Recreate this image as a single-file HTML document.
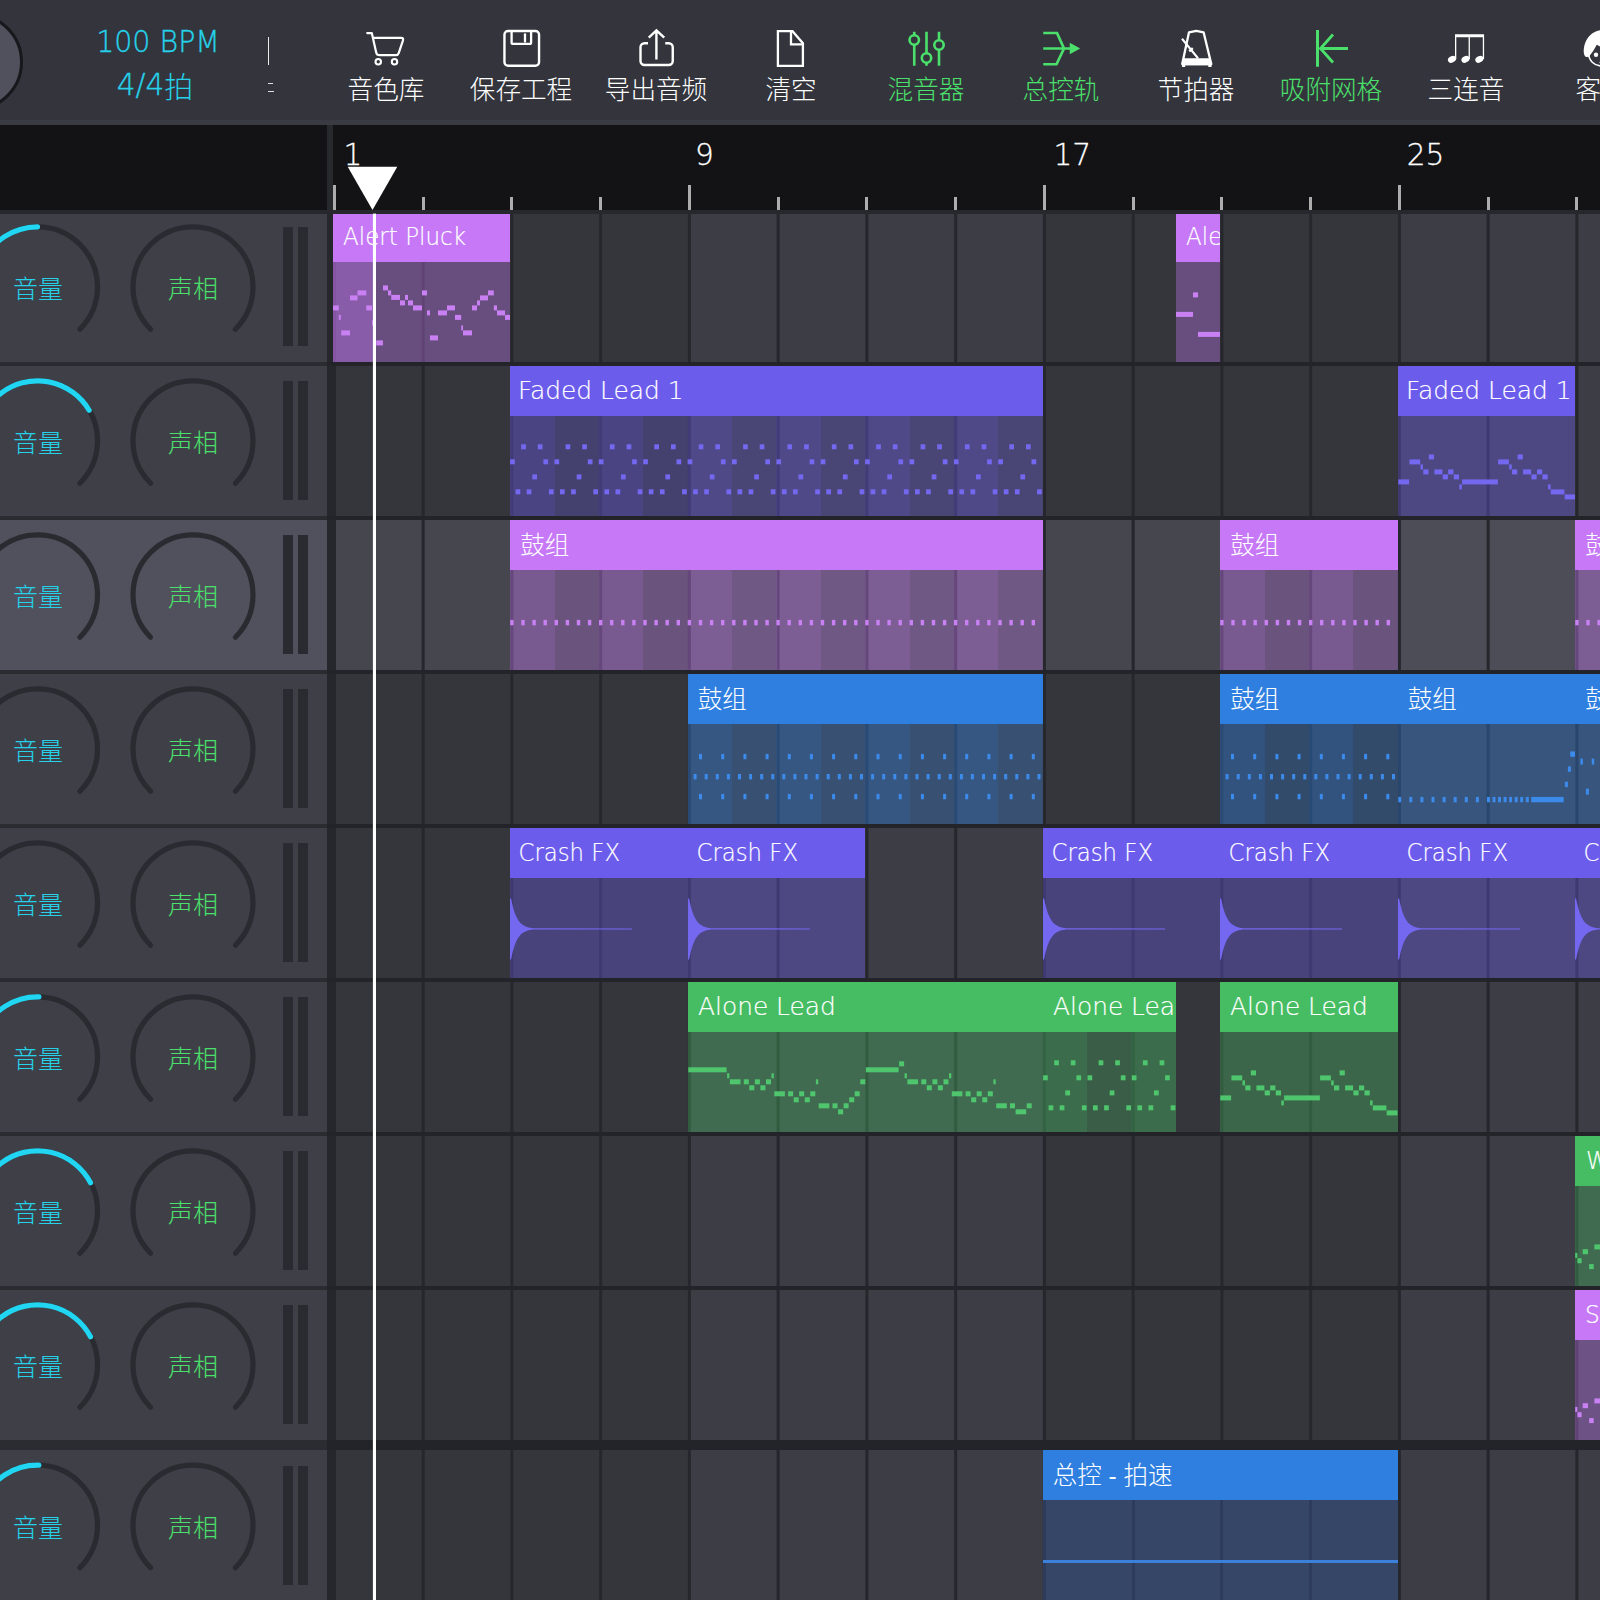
<!DOCTYPE html>
<html lang="zh"><head><meta charset="utf-8"><title>DAW</title>
<style>

*{box-sizing:border-box}
html,body{margin:0;padding:0}
body{width:1600px;height:1600px;overflow:hidden;position:relative;background:#26272c;font-family:"Liberation Sans","Noto Sans CJK SC",sans-serif;}
.abs{position:absolute}
.thin{font-family:"DejaVu Sans Light","DejaVu Sans","Liberation Sans",sans-serif;font-weight:200;-webkit-text-stroke:0.35px currentColor}
#toolbar{position:absolute;left:0;top:0;width:1600px;height:124.6px;background:#33343c}
#ruler{position:absolute;left:0;top:124.6px;width:1600px;height:85.4px;background:#131315}
.tb{position:absolute;top:0;width:140px;height:124px;text-align:center;color:#fff}
.tb .lb{position:absolute;left:-30px;right:-30px;top:72.6px;font-size:25.6px;line-height:34px;font-weight:300;white-space:nowrap;font-family:"Liberation Sans","Noto Sans CJK SC",sans-serif}
.tb svg{position:absolute;left:46px;top:24px;width:48px;height:48px;overflow:visible}
.tb.on{color:#4be06b}
.hdr{position:absolute;left:0;width:327px;background:#3e3f47}
.klabel{position:absolute;font-size:25px;line-height:30px;font-weight:300;white-space:nowrap;font-family:"Liberation Sans","Noto Sans CJK SC",sans-serif}
.meter{position:absolute;width:9.8px;background:#2a2b31}
.clip{position:absolute;overflow:hidden}
.clip .ch{position:absolute;left:0;top:0;right:0;color:#fff;white-space:nowrap;overflow:hidden}
.clip .ch span{position:absolute;left:11px;top:10px;font-family:"DejaVu Sans Light","DejaVu Sans","Liberation Sans",sans-serif;font-weight:200;font-size:24.5px;line-height:30px;letter-spacing:0;color:#fff;transform-origin:0 0;display:block;-webkit-text-stroke:0.2px #fff}
.clip .ch span.cjk{font-family:"Liberation Sans","Noto Sans CJK SC",sans-serif;font-weight:300;font-size:24.5px;left:10px;top:11px;letter-spacing:0;-webkit-text-stroke:0}
.rl{position:absolute;top:13.15px;color:#fff;font-family:"DejaVu Sans Light","DejaVu Sans","Liberation Sans",sans-serif;font-weight:200;font-size:29.5px;line-height:34px;letter-spacing:0;-webkit-text-stroke:0.3px #fff}

</style></head><body>
<div id="toolbar">
<div class="abs" style="left:-75px;top:13.3px;width:98px;height:98px;border-radius:50%;background:#50515c;border:3px solid #17181c"></div>
<div class="abs thin" style="left:57.5px;top:22.4px;width:200px;text-align:center;color:#25d2ea;font-size:29.5px;line-height:40px;transform:scaleX(0.965);transform-origin:100.5px 0">100 BPM</div>
<div class="abs thin" style="left:55px;top:65px;width:200px;text-align:center;color:#25d2ea;font-size:29.5px;line-height:40px">4/4<span style="font-family:'Liberation Sans','Noto Sans CJK SC',sans-serif;font-weight:300;font-size:29px;-webkit-text-stroke:0;position:relative;top:3px">拍</span></div>
<div class="abs" style="left:267.8px;top:36.5px;width:1.5px;height:28.5px;background:#ececec"></div>
<div class="abs" style="left:268px;top:82.6px;width:4.5px;height:1.4px;background:#e0e0e0"></div>
<div class="abs" style="left:268px;top:90.9px;width:6px;height:1.4px;background:#e0e0e0"></div>
<div class="tb" style="left:316px"><svg viewBox="0 0 48 48"><path d="M5.2 9.1H9.8L14.2 28.5Q14.8 31.2 17.5 31.2H34Q36 31.2 36.7 29.2L41 16.3Q41.7 13.9 39.3 13.9H11" fill="none" stroke="currentColor" stroke-width="2.2" stroke-linejoin="round" stroke-linecap="round"/><circle cx="16.25" cy="37.75" r="2.7" fill="none" stroke="currentColor" stroke-width="2.1"/><circle cx="32.5" cy="37.75" r="2.7" fill="none" stroke="currentColor" stroke-width="2.1"/></svg><div class="lb">音色库</div></div>
<div class="tb" style="left:451px"><svg viewBox="0 0 48 48"><rect x="7.45" y="6.95" width="34.6" height="34.85" rx="3.6" fill="none" stroke="currentColor" stroke-width="2.4"/><path d="M14.6 7V18.4Q14.6 19.9 16.1 19.9H32.6Q34.1 19.9 34.1 18.4V7" fill="none" stroke="currentColor" stroke-width="2.3"/><path d="M28 10.3v7.2" stroke="currentColor" stroke-width="2.3" stroke-linecap="round"/></svg><div class="lb">保存工程</div></div>
<div class="tb" style="left:586px"><svg viewBox="0 0 48 48"><path d="M16 19.25H12.5a4 4 0 0 0-4 4V37a4 4 0 0 0 4 4H36.75a4 4 0 0 0 4-4V23.25a4 4 0 0 0-4-4H33.25" fill="none" stroke="currentColor" stroke-width="2.4"/><path d="M24.4 35.5V7M16.75 13.6L24.45 6.4L32.25 13.6" fill="none" stroke="currentColor" stroke-width="2.4"/></svg><div class="lb">导出音频</div></div>
<div class="tb" style="left:721px"><svg viewBox="0 0 48 48"><path d="M10.9 7.2H25.5L35.9 19.3V41.8H10.9z" fill="none" stroke="currentColor" stroke-width="2.3" stroke-linejoin="miter"/><path d="M24 7.2V20.3H35.9" fill="none" stroke="currentColor" stroke-width="2.3"/></svg><div class="lb">清空</div></div>
<div class="tb on" style="left:856px"><svg viewBox="0 0 48 48"><g fill="none" stroke="currentColor" stroke-width="2.6"><path d="M12.25 7.75v3.5M12.25 20.7v21M24.5 7.75v21.5M24.5 38.7v3M37 7.75v8.5M37 25.7v16"/><circle cx="12.25" cy="16" r="4.7"/><circle cx="24.5" cy="34" r="4.7"/><circle cx="37" cy="21" r="4.7"/></g></svg><div class="lb">混音器</div></div>
<div class="tb on" style="left:991px"><svg viewBox="0 0 48 48"><g fill="none" stroke="currentColor" stroke-width="2.7" stroke-linejoin="miter"><path d="M6.25 9H20L27 24.5L19.5 40.25H6.25M6.25 24.5H34"/></g><path d="M32.75 18.75L43.25 24.4L32.75 30.25z" fill="currentColor"/></svg><div class="lb">总控轨</div></div>
<div class="tb" style="left:1126px"><svg viewBox="0 0 48 48"><g fill="none" stroke="currentColor" stroke-width="2.3" stroke-linejoin="round"><path d="M17 8.3L24.3 6.8L31.6 8.3L39.3 40H10.2z"/><path d="M10 14.75L26 34.25" stroke-width="2.1"/><path d="M17.2 27.3L20.8 24.2" stroke-width="2.4"/></g><path d="M11.6 34.3H37.9L39.8 41.2H9.7z" fill="currentColor"/><path d="M10 41h3.2v2H10zM36.3 41h3.2v2h-3.2z" fill="currentColor"/></svg><div class="lb">节拍器</div></div>
<div class="tb on" style="left:1261px"><svg viewBox="0 0 48 48"><g fill="none" stroke="currentColor" stroke-width="2.8"><path d="M10.5 6V42.75" stroke-width="3"/><path d="M13.5 24.5H41M26 10.5L13.5 24.5L26 38.5"/></g></svg><div class="lb">吸附网格</div></div>
<div class="tb" style="left:1396px"><svg viewBox="0 0 48 48"><g fill="currentColor"><path d="M13 10.25H42V13.25H13z"/><path d="M13 11h1.3v24H13zM26.6 11h1.3v24h-1.3zM40.8 11h1.3v24h-1.3z"/><ellipse cx="10" cy="35.3" rx="4.3" ry="3.1" transform="rotate(-28 10 35.3)"/><ellipse cx="23.5" cy="35.3" rx="4.3" ry="3.1" transform="rotate(-28 23.5 35.3)"/><ellipse cx="37.4" cy="35.3" rx="4.3" ry="3.1" transform="rotate(-28 37.4 35.3)"/></g></svg><div class="lb">三连音</div></div>
<div class="tb" style="left:1531px"><svg viewBox="0 0 48 48"><g><circle cx="24.5" cy="29" r="13" fill="#33343c" stroke="currentColor" stroke-width="1.6"/><path d="M7.6 31.5C5.8 28 6.8 21 9.5 16C12.5 10.5 18 6.5 24.5 6V24C22.5 22 21 21 19.6 21C17.5 25 15 29 12.5 32C11 33.6 8.6 33.4 7.6 31.5z" fill="currentColor"/><circle cx="19" cy="30.700" r="2.200" fill="currentColor"/><circle cx="23.700" cy="38.500" r="1.100" fill="currentColor"/></g></svg><div class="lb">客服</div></div>
</div>
<div class="abs" style="left:0;top:120.4px;width:1600px;height:4.4px;background:#3a3b42"></div>
<div id="ruler">
<div class="abs" style="left:327.2px;top:0;width:5.6px;height:86px;background:#28292d"></div>
<div class="abs" style="left:332.90px;top:60.4px;width:3px;height:25px;background:#adadad"></div>
<div class="rl" style="left:343.4px">1</div>
<div class="abs" style="left:421.65px;top:72.4px;width:3px;height:13px;background:#adadad"></div>
<div class="abs" style="left:510.40px;top:72.4px;width:3px;height:13px;background:#adadad"></div>
<div class="abs" style="left:599.15px;top:72.4px;width:3px;height:13px;background:#adadad"></div>
<div class="abs" style="left:687.90px;top:60.4px;width:3px;height:25px;background:#adadad"></div>
<div class="rl" style="left:694.9px">9</div>
<div class="abs" style="left:776.65px;top:72.4px;width:3px;height:13px;background:#adadad"></div>
<div class="abs" style="left:865.40px;top:72.4px;width:3px;height:13px;background:#adadad"></div>
<div class="abs" style="left:954.15px;top:72.4px;width:3px;height:13px;background:#adadad"></div>
<div class="abs" style="left:1042.90px;top:60.4px;width:3px;height:25px;background:#adadad"></div>
<div class="rl" style="left:1053.5px">17</div>
<div class="abs" style="left:1131.65px;top:72.4px;width:3px;height:13px;background:#adadad"></div>
<div class="abs" style="left:1220.40px;top:72.4px;width:3px;height:13px;background:#adadad"></div>
<div class="abs" style="left:1309.15px;top:72.4px;width:3px;height:13px;background:#adadad"></div>
<div class="abs" style="left:1397.90px;top:60.4px;width:3px;height:25px;background:#adadad"></div>
<div class="rl" style="left:1406.7px">25</div>
<div class="abs" style="left:1486.65px;top:72.4px;width:3px;height:13px;background:#adadad"></div>
<div class="abs" style="left:1575.40px;top:72.4px;width:3px;height:13px;background:#adadad"></div>
</div>
<div class="hdr" style="top:211.6px;height:150.4px;background:#3e3f47"></div>
<div class="abs" style="left:334.40px;top:211.6px;width:355.5px;height:150.4px;background:#35363c"></div>
<div class="abs" style="left:689.40px;top:211.6px;width:355.5px;height:150.4px;background:#3c3d45"></div>
<div class="abs" style="left:1044.40px;top:211.6px;width:355.5px;height:150.4px;background:#35363c"></div>
<div class="abs" style="left:1399.40px;top:211.6px;width:355.5px;height:150.4px;background:#3c3d45"></div>
<div class="meter" style="left:283.1px;top:227.2px;height:119px"></div>
<div class="meter" style="left:298.1px;top:227.2px;height:119px"></div>
<div class="klabel" style="left:13px;top:274.1px;color:#25d2ea">音量</div>
<div class="klabel" style="left:168px;top:274.1px;color:#4be06b">声相</div>
<div class="hdr" style="top:365.6px;height:150.4px;background:#3e3f47"></div>
<div class="abs" style="left:334.40px;top:365.6px;width:355.5px;height:150.4px;background:#35363c"></div>
<div class="abs" style="left:689.40px;top:365.6px;width:355.5px;height:150.4px;background:#3c3d45"></div>
<div class="abs" style="left:1044.40px;top:365.6px;width:355.5px;height:150.4px;background:#35363c"></div>
<div class="abs" style="left:1399.40px;top:365.6px;width:355.5px;height:150.4px;background:#3c3d45"></div>
<div class="meter" style="left:283.1px;top:381.2px;height:119px"></div>
<div class="meter" style="left:298.1px;top:381.2px;height:119px"></div>
<div class="klabel" style="left:13px;top:428.1px;color:#25d2ea">音量</div>
<div class="klabel" style="left:168px;top:428.1px;color:#4be06b">声相</div>
<div class="hdr" style="top:519.6px;height:150.4px;background:#50515c"></div>
<div class="abs" style="left:334.40px;top:519.6px;width:355.5px;height:150.4px;background:#45464e"></div>
<div class="abs" style="left:689.40px;top:519.6px;width:355.5px;height:150.4px;background:#4c4d56"></div>
<div class="abs" style="left:1044.40px;top:519.6px;width:355.5px;height:150.4px;background:#45464e"></div>
<div class="abs" style="left:1399.40px;top:519.6px;width:355.5px;height:150.4px;background:#4c4d56"></div>
<div class="meter" style="left:283.1px;top:535.2px;height:119px"></div>
<div class="meter" style="left:298.1px;top:535.2px;height:119px"></div>
<div class="klabel" style="left:13px;top:582.1px;color:#25d2ea">音量</div>
<div class="klabel" style="left:168px;top:582.1px;color:#4be06b">声相</div>
<div class="hdr" style="top:673.6px;height:150.4px;background:#3e3f47"></div>
<div class="abs" style="left:334.40px;top:673.6px;width:355.5px;height:150.4px;background:#35363c"></div>
<div class="abs" style="left:689.40px;top:673.6px;width:355.5px;height:150.4px;background:#3c3d45"></div>
<div class="abs" style="left:1044.40px;top:673.6px;width:355.5px;height:150.4px;background:#35363c"></div>
<div class="abs" style="left:1399.40px;top:673.6px;width:355.5px;height:150.4px;background:#3c3d45"></div>
<div class="meter" style="left:283.1px;top:689.2px;height:119px"></div>
<div class="meter" style="left:298.1px;top:689.2px;height:119px"></div>
<div class="klabel" style="left:13px;top:736.1px;color:#25d2ea">音量</div>
<div class="klabel" style="left:168px;top:736.1px;color:#4be06b">声相</div>
<div class="hdr" style="top:827.6px;height:150.4px;background:#3e3f47"></div>
<div class="abs" style="left:334.40px;top:827.6px;width:355.5px;height:150.4px;background:#35363c"></div>
<div class="abs" style="left:689.40px;top:827.6px;width:355.5px;height:150.4px;background:#3c3d45"></div>
<div class="abs" style="left:1044.40px;top:827.6px;width:355.5px;height:150.4px;background:#35363c"></div>
<div class="abs" style="left:1399.40px;top:827.6px;width:355.5px;height:150.4px;background:#3c3d45"></div>
<div class="meter" style="left:283.1px;top:843.2px;height:119px"></div>
<div class="meter" style="left:298.1px;top:843.2px;height:119px"></div>
<div class="klabel" style="left:13px;top:890.1px;color:#25d2ea">音量</div>
<div class="klabel" style="left:168px;top:890.1px;color:#4be06b">声相</div>
<div class="hdr" style="top:981.6px;height:150.4px;background:#3e3f47"></div>
<div class="abs" style="left:334.40px;top:981.6px;width:355.5px;height:150.4px;background:#35363c"></div>
<div class="abs" style="left:689.40px;top:981.6px;width:355.5px;height:150.4px;background:#3c3d45"></div>
<div class="abs" style="left:1044.40px;top:981.6px;width:355.5px;height:150.4px;background:#35363c"></div>
<div class="abs" style="left:1399.40px;top:981.6px;width:355.5px;height:150.4px;background:#3c3d45"></div>
<div class="meter" style="left:283.1px;top:997.2px;height:119px"></div>
<div class="meter" style="left:298.1px;top:997.2px;height:119px"></div>
<div class="klabel" style="left:13px;top:1044.1px;color:#25d2ea">音量</div>
<div class="klabel" style="left:168px;top:1044.1px;color:#4be06b">声相</div>
<div class="hdr" style="top:1135.6px;height:150.4px;background:#3e3f47"></div>
<div class="abs" style="left:334.40px;top:1135.6px;width:355.5px;height:150.4px;background:#35363c"></div>
<div class="abs" style="left:689.40px;top:1135.6px;width:355.5px;height:150.4px;background:#3c3d45"></div>
<div class="abs" style="left:1044.40px;top:1135.6px;width:355.5px;height:150.4px;background:#35363c"></div>
<div class="abs" style="left:1399.40px;top:1135.6px;width:355.5px;height:150.4px;background:#3c3d45"></div>
<div class="meter" style="left:283.1px;top:1151.2px;height:119px"></div>
<div class="meter" style="left:298.1px;top:1151.2px;height:119px"></div>
<div class="klabel" style="left:13px;top:1198.1px;color:#25d2ea">音量</div>
<div class="klabel" style="left:168px;top:1198.1px;color:#4be06b">声相</div>
<div class="hdr" style="top:1289.6px;height:150.4px;background:#3e3f47"></div>
<div class="abs" style="left:334.40px;top:1289.6px;width:355.5px;height:150.4px;background:#35363c"></div>
<div class="abs" style="left:689.40px;top:1289.6px;width:355.5px;height:150.4px;background:#3c3d45"></div>
<div class="abs" style="left:1044.40px;top:1289.6px;width:355.5px;height:150.4px;background:#35363c"></div>
<div class="abs" style="left:1399.40px;top:1289.6px;width:355.5px;height:150.4px;background:#3c3d45"></div>
<div class="meter" style="left:283.1px;top:1305.2px;height:119px"></div>
<div class="meter" style="left:298.1px;top:1305.2px;height:119px"></div>
<div class="klabel" style="left:13px;top:1352.1px;color:#25d2ea">音量</div>
<div class="klabel" style="left:168px;top:1352.1px;color:#4be06b">声相</div>
<div class="hdr" style="top:1450.0px;height:160.0px;background:#3e3f47"></div>
<div class="abs" style="left:334.40px;top:1450.0px;width:355.5px;height:160.0px;background:#35363c"></div>
<div class="abs" style="left:689.40px;top:1450.0px;width:355.5px;height:160.0px;background:#3c3d45"></div>
<div class="abs" style="left:1044.40px;top:1450.0px;width:355.5px;height:160.0px;background:#35363c"></div>
<div class="abs" style="left:1399.40px;top:1450.0px;width:355.5px;height:160.0px;background:#3c3d45"></div>
<div class="meter" style="left:283.1px;top:1465.6px;height:119px"></div>
<div class="meter" style="left:298.1px;top:1465.6px;height:119px"></div>
<div class="klabel" style="left:13px;top:1512.5px;color:#25d2ea">音量</div>
<div class="klabel" style="left:168px;top:1512.5px;color:#4be06b">声相</div>
<div class="abs" style="left:0;top:210px;width:1600px;height:3.700px;background:#24262c"></div>
<svg class="abs" style="left:0;top:0" width="1600" height="1600" viewBox="0 0 1600 1600">
<path d="M-4.93 329.23 A60.0 60.0 0 1 1 79.93 329.23" fill="none" stroke="#2a2b31" stroke-width="5.2" stroke-linecap="round"/>
<path d="M150.57 329.23 A60.0 60.0 0 1 1 235.43 329.23" fill="none" stroke="#2a2b31" stroke-width="5.2" stroke-linecap="round"/>
<path d="M-4.93 329.23 A60.0 60.0 0 0 1 37.50 226.80" fill="none" stroke="#21d6f3" stroke-width="5.2" stroke-linecap="round"/>
<path d="M-4.93 483.23 A60.0 60.0 0 1 1 79.93 483.23" fill="none" stroke="#2a2b31" stroke-width="5.2" stroke-linecap="round"/>
<path d="M150.57 483.23 A60.0 60.0 0 1 1 235.43 483.23" fill="none" stroke="#2a2b31" stroke-width="5.2" stroke-linecap="round"/>
<path d="M-4.93 483.23 A60.0 60.0 0 1 1 89.14 410.26" fill="none" stroke="#21d6f3" stroke-width="5.2" stroke-linecap="round"/>
<path d="M-4.93 637.23 A60.0 60.0 0 1 1 79.93 637.23" fill="none" stroke="#2a2b31" stroke-width="5.2" stroke-linecap="round"/>
<path d="M150.57 637.23 A60.0 60.0 0 1 1 235.43 637.23" fill="none" stroke="#2a2b31" stroke-width="5.2" stroke-linecap="round"/>
<path d="M-4.93 637.23 A60.0 60.0 0 0 1 -11.04 559.53" fill="none" stroke="#21d6f3" stroke-width="5.2" stroke-linecap="round"/>
<path d="M-4.93 791.23 A60.0 60.0 0 1 1 79.93 791.23" fill="none" stroke="#2a2b31" stroke-width="5.2" stroke-linecap="round"/>
<path d="M150.57 791.23 A60.0 60.0 0 1 1 235.43 791.23" fill="none" stroke="#2a2b31" stroke-width="5.2" stroke-linecap="round"/>
<path d="M-4.93 791.23 A60.0 60.0 0 0 1 -11.04 713.53" fill="none" stroke="#21d6f3" stroke-width="5.2" stroke-linecap="round"/>
<path d="M-4.93 945.23 A60.0 60.0 0 1 1 79.93 945.23" fill="none" stroke="#2a2b31" stroke-width="5.2" stroke-linecap="round"/>
<path d="M150.57 945.23 A60.0 60.0 0 1 1 235.43 945.23" fill="none" stroke="#2a2b31" stroke-width="5.2" stroke-linecap="round"/>
<path d="M-4.93 945.23 A60.0 60.0 0 0 1 -11.04 867.53" fill="none" stroke="#21d6f3" stroke-width="5.2" stroke-linecap="round"/>
<path d="M-4.93 1099.23 A60.0 60.0 0 1 1 79.93 1099.23" fill="none" stroke="#2a2b31" stroke-width="5.2" stroke-linecap="round"/>
<path d="M150.57 1099.23 A60.0 60.0 0 1 1 235.43 1099.23" fill="none" stroke="#2a2b31" stroke-width="5.2" stroke-linecap="round"/>
<path d="M-4.93 1099.23 A60.0 60.0 0 0 1 38.91 996.82" fill="none" stroke="#21d6f3" stroke-width="5.2" stroke-linecap="round"/>
<path d="M-4.93 1253.23 A60.0 60.0 0 1 1 79.93 1253.23" fill="none" stroke="#2a2b31" stroke-width="5.2" stroke-linecap="round"/>
<path d="M150.57 1253.23 A60.0 60.0 0 1 1 235.43 1253.23" fill="none" stroke="#2a2b31" stroke-width="5.2" stroke-linecap="round"/>
<path d="M-4.93 1253.23 A60.0 60.0 0 1 1 90.53 1182.72" fill="none" stroke="#21d6f3" stroke-width="5.2" stroke-linecap="round"/>
<path d="M-4.93 1407.23 A60.0 60.0 0 1 1 79.93 1407.23" fill="none" stroke="#2a2b31" stroke-width="5.2" stroke-linecap="round"/>
<path d="M150.57 1407.23 A60.0 60.0 0 1 1 235.43 1407.23" fill="none" stroke="#2a2b31" stroke-width="5.2" stroke-linecap="round"/>
<path d="M-4.93 1407.23 A60.0 60.0 0 1 1 90.53 1336.72" fill="none" stroke="#21d6f3" stroke-width="5.2" stroke-linecap="round"/>
<path d="M-4.93 1567.63 A60.0 60.0 0 1 1 79.93 1567.63" fill="none" stroke="#2a2b31" stroke-width="5.2" stroke-linecap="round"/>
<path d="M150.57 1567.63 A60.0 60.0 0 1 1 235.43 1567.63" fill="none" stroke="#2a2b31" stroke-width="5.2" stroke-linecap="round"/>
<path d="M-4.93 1567.63 A60.0 60.0 0 0 1 38.91 1465.22" fill="none" stroke="#21d6f3" stroke-width="5.2" stroke-linecap="round"/>
<rect x="327" y="213.700" width="8.900" height="1400" fill="#26272c"/>
<rect x="332.90" y="213.700" width="3" height="1400" fill="#26272c"/>
<rect x="421.65" y="213.700" width="3" height="1400" fill="#26272c"/>
<rect x="510.40" y="213.700" width="3" height="1400" fill="#26272c"/>
<rect x="599.15" y="213.700" width="3" height="1400" fill="#26272c"/>
<rect x="687.90" y="213.700" width="3" height="1400" fill="#26272c"/>
<rect x="776.65" y="213.700" width="3" height="1400" fill="#26272c"/>
<rect x="865.40" y="213.700" width="3" height="1400" fill="#26272c"/>
<rect x="954.15" y="213.700" width="3" height="1400" fill="#26272c"/>
<rect x="1042.90" y="213.700" width="3" height="1400" fill="#26272c"/>
<rect x="1131.65" y="213.700" width="3" height="1400" fill="#26272c"/>
<rect x="1220.40" y="213.700" width="3" height="1400" fill="#26272c"/>
<rect x="1309.15" y="213.700" width="3" height="1400" fill="#26272c"/>
<rect x="1397.90" y="213.700" width="3" height="1400" fill="#26272c"/>
<rect x="1486.65" y="213.700" width="3" height="1400" fill="#26272c"/>
<rect x="1575.40" y="213.700" width="3" height="1400" fill="#26272c"/>
<rect x="1664.15" y="213.700" width="3" height="1400" fill="#26272c"/>
<rect x="0" y="362.0" width="327" height="3.6" fill="#2b2c31"/>
<rect x="327" y="362.0" width="1273" height="3.6" fill="#232429"/>
<rect x="0" y="516.0" width="327" height="3.6" fill="#2b2c31"/>
<rect x="327" y="516.0" width="1273" height="3.6" fill="#232429"/>
<rect x="0" y="670.0" width="327" height="3.6" fill="#2b2c31"/>
<rect x="327" y="670.0" width="1273" height="3.6" fill="#232429"/>
<rect x="0" y="824.0" width="327" height="3.6" fill="#2b2c31"/>
<rect x="327" y="824.0" width="1273" height="3.6" fill="#232429"/>
<rect x="0" y="978.0" width="327" height="3.6" fill="#2b2c31"/>
<rect x="327" y="978.0" width="1273" height="3.6" fill="#232429"/>
<rect x="0" y="1132.0" width="327" height="3.6" fill="#2b2c31"/>
<rect x="327" y="1132.0" width="1273" height="3.6" fill="#232429"/>
<rect x="0" y="1286.0" width="327" height="3.6" fill="#2b2c31"/>
<rect x="327" y="1286.0" width="1273" height="3.6" fill="#232429"/>
<rect x="0" y="1440.0" width="327" height="10.0" fill="#2b2c31"/>
<rect x="327" y="1440.0" width="1273" height="10.0" fill="#232429"/>
</svg>
<div class="clip" style="left:332.70px;top:211.6px;width:177.50px;height:150.4px">
<div class="abs" style="left:0;top:50.2px;width:100%;height:100.2px;background:rgba(198,120,246,0.360)"></div>
<div class="abs" style="left:0;top:50.2px;width:41px;height:100.2px;background:rgba(198,120,246,0.360)"></div>
<svg class="abs" style="left:0;top:0" width="177.5" height="150.4" shape-rendering="auto" fill="#c880f2"><rect x="0.0" y="93.4" width="5.8" height="5.0"/><rect x="5.8" y="102.9" width="2.0" height="5.0"/><rect x="8.2" y="118.4" width="8.8" height="5.0"/><rect x="17.0" y="83.4" width="7.5" height="5.0"/><rect x="24.5" y="78.4" width="8.8" height="5.0"/><rect x="33.2" y="93.4" width="5.8" height="5.0"/><rect x="39.0" y="108.4" width="1.8" height="5.0"/><rect x="43.2" y="128.4" width="6.8" height="5.0"/><rect x="50.0" y="73.4" width="5.0" height="5.0"/><rect x="55.0" y="78.4" width="3.2" height="5.0"/><rect x="58.2" y="82.9" width="8.8" height="5.0"/><rect x="67.0" y="88.4" width="5.0" height="5.0"/><rect x="72.0" y="82.9" width="3.0" height="5.0"/><rect x="75.0" y="88.4" width="5.0" height="5.0"/><rect x="80.0" y="93.4" width="9.0" height="5.0"/><rect x="89.0" y="78.4" width="5.0" height="5.0"/><rect x="94.0" y="98.4" width="3.0" height="5.0"/><rect x="97.0" y="123.4" width="8.0" height="5.0"/><rect x="105.0" y="98.4" width="9.0" height="5.0"/><rect x="114.0" y="93.4" width="8.0" height="5.0"/><rect x="122.0" y="102.9" width="6.2" height="5.0"/><rect x="128.2" y="113.4" width="1.8" height="5.0"/><rect x="130.0" y="118.4" width="9.0" height="5.0"/><rect x="139.0" y="93.4" width="5.0" height="5.0"/><rect x="144.0" y="88.4" width="3.0" height="5.0"/><rect x="147.0" y="83.4" width="8.0" height="5.0"/><rect x="155.0" y="78.4" width="5.8" height="5.0"/><rect x="160.8" y="93.4" width="3.2" height="5.0"/><rect x="164.0" y="98.4" width="8.0" height="5.0"/><rect x="172.0" y="102.9" width="5.0" height="5.0"/></svg>
<div class="ch" style="height:50.2px;background:#c678f6"><span style="transform:translateX(-1.0px) scaleX(0.940)">Alert Pluck</span></div>
</div>
<div class="clip" style="left:1175.83px;top:211.6px;width:44.38px;height:150.4px">
<div class="abs" style="left:0;top:50.2px;width:100%;height:100.2px;background:rgba(198,120,246,0.360)"></div>
<svg class="abs" style="left:0;top:0" width="44.4" height="150.4" shape-rendering="auto" fill="#c880f2"><rect x="17.0" y="80.4" width="5.0" height="5.0"/><rect x="0.0" y="99.9" width="17.0" height="5.0"/><rect x="22.0" y="119.9" width="22.0" height="5.0"/></svg>
<div class="ch" style="height:50.2px;background:#c678f6"><span style="transform:translateX(-1.0px) scaleX(0.940)">Alert Pluck</span></div>
</div>
<div class="clip" style="left:510.20px;top:365.6px;width:532.50px;height:150.4px">
<div class="abs" style="left:0.00px;top:50.2px;width:44.42px;height:100.2px;background:rgba(108,92,236,0.400)"></div>
<div class="abs" style="left:44.38px;top:50.2px;width:44.42px;height:100.2px;background:rgba(108,92,236,0.290)"></div>
<div class="abs" style="left:88.75px;top:50.2px;width:44.42px;height:100.2px;background:rgba(108,92,236,0.400)"></div>
<div class="abs" style="left:133.12px;top:50.2px;width:44.42px;height:100.2px;background:rgba(108,92,236,0.290)"></div>
<div class="abs" style="left:177.50px;top:50.2px;width:44.42px;height:100.2px;background:rgba(108,92,236,0.400)"></div>
<div class="abs" style="left:221.88px;top:50.2px;width:44.42px;height:100.2px;background:rgba(108,92,236,0.290)"></div>
<div class="abs" style="left:266.25px;top:50.2px;width:44.42px;height:100.2px;background:rgba(108,92,236,0.400)"></div>
<div class="abs" style="left:310.62px;top:50.2px;width:44.42px;height:100.2px;background:rgba(108,92,236,0.290)"></div>
<div class="abs" style="left:355.00px;top:50.2px;width:44.42px;height:100.2px;background:rgba(108,92,236,0.400)"></div>
<div class="abs" style="left:399.38px;top:50.2px;width:44.42px;height:100.2px;background:rgba(108,92,236,0.290)"></div>
<div class="abs" style="left:443.75px;top:50.2px;width:44.42px;height:100.2px;background:rgba(108,92,236,0.400)"></div>
<div class="abs" style="left:488.12px;top:50.2px;width:44.42px;height:100.2px;background:rgba(108,92,236,0.290)"></div>
<svg class="abs" style="left:0;top:0" width="532.5" height="150.4" shape-rendering="auto" fill="#7468f0"><rect x="0.1" y="93.3" width="4.7" height="5.0"/><rect x="5.6" y="123.3" width="4.7" height="5.0"/><rect x="11.2" y="78.3" width="4.7" height="5.0"/><rect x="16.7" y="123.3" width="4.7" height="5.0"/><rect x="22.3" y="108.4" width="4.7" height="5.0"/><rect x="27.8" y="78.3" width="4.7" height="5.0"/><rect x="33.4" y="93.3" width="4.7" height="5.0"/><rect x="38.9" y="123.3" width="4.7" height="5.0"/><rect x="44.5" y="93.3" width="4.7" height="5.0"/><rect x="50.0" y="123.3" width="4.7" height="5.0"/><rect x="55.6" y="78.3" width="4.7" height="5.0"/><rect x="61.1" y="123.3" width="4.7" height="5.0"/><rect x="66.7" y="108.4" width="4.7" height="5.0"/><rect x="72.2" y="78.3" width="4.7" height="5.0"/><rect x="77.8" y="93.3" width="4.7" height="5.0"/><rect x="83.3" y="123.3" width="4.7" height="5.0"/><rect x="88.8" y="93.3" width="4.7" height="5.0"/><rect x="94.4" y="123.3" width="4.7" height="5.0"/><rect x="99.9" y="78.3" width="4.7" height="5.0"/><rect x="105.5" y="123.3" width="4.7" height="5.0"/><rect x="111.0" y="108.4" width="4.7" height="5.0"/><rect x="116.6" y="78.3" width="4.7" height="5.0"/><rect x="122.1" y="93.3" width="4.7" height="5.0"/><rect x="127.7" y="123.3" width="4.7" height="5.0"/><rect x="133.2" y="93.3" width="4.7" height="5.0"/><rect x="138.8" y="123.3" width="4.7" height="5.0"/><rect x="144.3" y="78.3" width="4.7" height="5.0"/><rect x="149.9" y="123.3" width="4.7" height="5.0"/><rect x="155.4" y="108.4" width="4.7" height="5.0"/><rect x="161.0" y="78.3" width="4.7" height="5.0"/><rect x="166.5" y="93.3" width="4.7" height="5.0"/><rect x="172.1" y="123.3" width="4.7" height="5.0"/><rect x="177.6" y="93.3" width="4.7" height="5.0"/><rect x="183.1" y="123.3" width="4.7" height="5.0"/><rect x="188.7" y="78.3" width="4.7" height="5.0"/><rect x="194.2" y="123.3" width="4.7" height="5.0"/><rect x="199.8" y="108.4" width="4.7" height="5.0"/><rect x="205.3" y="78.3" width="4.7" height="5.0"/><rect x="210.9" y="93.3" width="4.7" height="5.0"/><rect x="216.4" y="123.3" width="4.7" height="5.0"/><rect x="222.0" y="93.3" width="4.7" height="5.0"/><rect x="227.5" y="123.3" width="4.7" height="5.0"/><rect x="233.1" y="78.3" width="4.7" height="5.0"/><rect x="238.6" y="123.3" width="4.7" height="5.0"/><rect x="244.2" y="108.4" width="4.7" height="5.0"/><rect x="249.7" y="78.3" width="4.7" height="5.0"/><rect x="255.3" y="93.3" width="4.7" height="5.0"/><rect x="260.8" y="123.3" width="4.7" height="5.0"/><rect x="266.4" y="93.3" width="4.7" height="5.0"/><rect x="271.9" y="123.3" width="4.7" height="5.0"/><rect x="277.4" y="78.3" width="4.7" height="5.0"/><rect x="283.0" y="123.3" width="4.7" height="5.0"/><rect x="288.5" y="108.4" width="4.7" height="5.0"/><rect x="294.1" y="78.3" width="4.7" height="5.0"/><rect x="299.6" y="93.3" width="4.7" height="5.0"/><rect x="305.2" y="123.3" width="4.7" height="5.0"/><rect x="310.7" y="93.3" width="4.7" height="5.0"/><rect x="316.3" y="123.3" width="4.7" height="5.0"/><rect x="321.8" y="78.3" width="4.7" height="5.0"/><rect x="327.4" y="123.3" width="4.7" height="5.0"/><rect x="332.9" y="108.4" width="4.7" height="5.0"/><rect x="338.5" y="78.3" width="4.7" height="5.0"/><rect x="344.0" y="93.3" width="4.7" height="5.0"/><rect x="349.6" y="123.3" width="4.7" height="5.0"/><rect x="355.1" y="93.3" width="4.7" height="5.0"/><rect x="360.6" y="123.3" width="4.7" height="5.0"/><rect x="366.2" y="78.3" width="4.7" height="5.0"/><rect x="371.7" y="123.3" width="4.7" height="5.0"/><rect x="377.3" y="108.4" width="4.7" height="5.0"/><rect x="382.8" y="78.3" width="4.7" height="5.0"/><rect x="388.4" y="93.3" width="4.7" height="5.0"/><rect x="393.9" y="123.3" width="4.7" height="5.0"/><rect x="399.5" y="93.3" width="4.7" height="5.0"/><rect x="405.0" y="123.3" width="4.7" height="5.0"/><rect x="410.6" y="78.3" width="4.7" height="5.0"/><rect x="416.1" y="123.3" width="4.7" height="5.0"/><rect x="421.7" y="108.4" width="4.7" height="5.0"/><rect x="427.2" y="78.3" width="4.7" height="5.0"/><rect x="432.8" y="93.3" width="4.7" height="5.0"/><rect x="438.3" y="123.3" width="4.7" height="5.0"/><rect x="443.9" y="93.3" width="4.7" height="5.0"/><rect x="449.4" y="123.3" width="4.7" height="5.0"/><rect x="454.9" y="78.3" width="4.7" height="5.0"/><rect x="460.5" y="123.3" width="4.7" height="5.0"/><rect x="466.0" y="108.4" width="4.7" height="5.0"/><rect x="471.6" y="78.3" width="4.7" height="5.0"/><rect x="477.1" y="93.3" width="4.7" height="5.0"/><rect x="482.7" y="123.3" width="4.7" height="5.0"/><rect x="488.2" y="93.3" width="4.7" height="5.0"/><rect x="493.8" y="123.3" width="4.7" height="5.0"/><rect x="499.3" y="78.3" width="4.7" height="5.0"/><rect x="504.9" y="123.3" width="4.7" height="5.0"/><rect x="510.4" y="108.4" width="4.7" height="5.0"/><rect x="516.0" y="78.3" width="4.7" height="5.0"/><rect x="521.5" y="93.3" width="4.7" height="5.0"/><rect x="527.1" y="123.3" width="4.7" height="5.0"/></svg>
<div class="ch" style="height:50.2px;background:#6c5cec"><span style="transform:translateX(-3.0px) scaleX(1.015)">Faded Lead 1</span></div>
</div>
<div class="clip" style="left:1397.70px;top:365.6px;width:177.50px;height:150.4px">
<div class="abs" style="left:0;top:50.2px;width:100%;height:100.2px;background:rgba(108,92,236,0.360)"></div>
<svg class="abs" style="left:0;top:0" width="177.5" height="150.4" shape-rendering="auto" fill="#7468f0"><rect x="0.3" y="113.4" width="10.8" height="5.0"/><rect x="11.4" y="93.4" width="10.8" height="5.0"/><rect x="22.5" y="98.4" width="2.5" height="5.0"/><rect x="25.3" y="103.4" width="5.2" height="5.0"/><rect x="30.8" y="88.4" width="5.2" height="5.0"/><rect x="36.4" y="103.4" width="8.0" height="5.0"/><rect x="44.7" y="108.4" width="5.2" height="5.0"/><rect x="50.2" y="103.4" width="5.2" height="5.0"/><rect x="55.8" y="108.4" width="5.2" height="5.0"/><rect x="61.3" y="118.4" width="2.5" height="5.0"/><rect x="64.1" y="113.4" width="35.8" height="5.0"/><rect x="100.1" y="93.4" width="10.8" height="5.0"/><rect x="111.2" y="98.4" width="2.5" height="5.0"/><rect x="114.0" y="103.4" width="5.2" height="5.0"/><rect x="119.6" y="88.4" width="5.2" height="5.0"/><rect x="125.1" y="103.4" width="8.0" height="5.0"/><rect x="133.4" y="108.4" width="5.2" height="5.0"/><rect x="139.0" y="103.4" width="5.2" height="5.0"/><rect x="144.5" y="108.4" width="5.2" height="5.0"/><rect x="150.1" y="118.4" width="2.5" height="5.0"/><rect x="152.8" y="123.4" width="13.6" height="5.0"/><rect x="166.7" y="128.4" width="10.8" height="5.0"/></svg>
<div class="ch" style="height:50.2px;background:#6c5cec"><span style="transform:translateX(-3.0px) scaleX(1.015)">Faded Lead 1</span></div>
</div>
<div class="clip" style="left:510.20px;top:519.6px;width:532.50px;height:150.4px">
<div class="abs" style="left:0.00px;top:50.2px;width:44.42px;height:100.2px;background:rgba(198,120,246,0.400)"></div>
<div class="abs" style="left:44.38px;top:50.2px;width:44.42px;height:100.2px;background:rgba(198,120,246,0.290)"></div>
<div class="abs" style="left:88.75px;top:50.2px;width:44.42px;height:100.2px;background:rgba(198,120,246,0.400)"></div>
<div class="abs" style="left:133.12px;top:50.2px;width:44.42px;height:100.2px;background:rgba(198,120,246,0.290)"></div>
<div class="abs" style="left:177.50px;top:50.2px;width:44.42px;height:100.2px;background:rgba(198,120,246,0.400)"></div>
<div class="abs" style="left:221.88px;top:50.2px;width:44.42px;height:100.2px;background:rgba(198,120,246,0.290)"></div>
<div class="abs" style="left:266.25px;top:50.2px;width:44.42px;height:100.2px;background:rgba(198,120,246,0.400)"></div>
<div class="abs" style="left:310.62px;top:50.2px;width:44.42px;height:100.2px;background:rgba(198,120,246,0.290)"></div>
<div class="abs" style="left:355.00px;top:50.2px;width:44.42px;height:100.2px;background:rgba(198,120,246,0.400)"></div>
<div class="abs" style="left:399.38px;top:50.2px;width:44.42px;height:100.2px;background:rgba(198,120,246,0.290)"></div>
<div class="abs" style="left:443.75px;top:50.2px;width:44.42px;height:100.2px;background:rgba(198,120,246,0.400)"></div>
<div class="abs" style="left:488.12px;top:50.2px;width:44.42px;height:100.2px;background:rgba(198,120,246,0.290)"></div>
<svg class="abs" style="left:0;top:0" width="532.5" height="150.4" shape-rendering="auto" fill="#c880f2"><rect x="0.2" y="99.9" width="3.4" height="5.4"/><rect x="11.3" y="99.9" width="3.4" height="5.4"/><rect x="22.4" y="99.9" width="3.4" height="5.4"/><rect x="33.5" y="99.9" width="3.4" height="5.4"/><rect x="44.6" y="99.9" width="3.4" height="5.4"/><rect x="55.7" y="99.9" width="3.4" height="5.4"/><rect x="66.8" y="99.9" width="3.4" height="5.4"/><rect x="77.9" y="99.9" width="3.4" height="5.4"/><rect x="89.0" y="99.9" width="3.4" height="5.4"/><rect x="100.0" y="99.9" width="3.4" height="5.4"/><rect x="111.1" y="99.9" width="3.4" height="5.4"/><rect x="122.2" y="99.9" width="3.4" height="5.4"/><rect x="133.3" y="99.9" width="3.4" height="5.4"/><rect x="144.4" y="99.9" width="3.4" height="5.4"/><rect x="155.5" y="99.9" width="3.4" height="5.4"/><rect x="166.6" y="99.9" width="3.4" height="5.4"/><rect x="177.7" y="99.9" width="3.4" height="5.4"/><rect x="188.8" y="99.9" width="3.4" height="5.4"/><rect x="199.9" y="99.9" width="3.4" height="5.4"/><rect x="211.0" y="99.9" width="3.4" height="5.4"/><rect x="222.1" y="99.9" width="3.4" height="5.4"/><rect x="233.2" y="99.9" width="3.4" height="5.4"/><rect x="244.3" y="99.9" width="3.4" height="5.4"/><rect x="255.4" y="99.9" width="3.4" height="5.4"/><rect x="266.4" y="99.9" width="3.4" height="5.4"/><rect x="277.5" y="99.9" width="3.4" height="5.4"/><rect x="288.6" y="99.9" width="3.4" height="5.4"/><rect x="299.7" y="99.9" width="3.4" height="5.4"/><rect x="310.8" y="99.9" width="3.4" height="5.4"/><rect x="321.9" y="99.9" width="3.4" height="5.4"/><rect x="333.0" y="99.9" width="3.4" height="5.4"/><rect x="344.1" y="99.9" width="3.4" height="5.4"/><rect x="355.2" y="99.9" width="3.4" height="5.4"/><rect x="366.3" y="99.9" width="3.4" height="5.4"/><rect x="377.4" y="99.9" width="3.4" height="5.4"/><rect x="388.5" y="99.9" width="3.4" height="5.4"/><rect x="399.6" y="99.9" width="3.4" height="5.4"/><rect x="410.7" y="99.9" width="3.4" height="5.4"/><rect x="421.8" y="99.9" width="3.4" height="5.4"/><rect x="432.9" y="99.9" width="3.4" height="5.4"/><rect x="443.9" y="99.9" width="3.4" height="5.4"/><rect x="455.0" y="99.9" width="3.4" height="5.4"/><rect x="466.1" y="99.9" width="3.4" height="5.4"/><rect x="477.2" y="99.9" width="3.4" height="5.4"/><rect x="488.3" y="99.9" width="3.4" height="5.4"/><rect x="499.4" y="99.9" width="3.4" height="5.4"/><rect x="510.5" y="99.9" width="3.4" height="5.4"/><rect x="521.6" y="99.9" width="3.4" height="5.4"/></svg>
<div class="ch" style="height:50.2px;background:#c678f6"><span class="cjk">鼓组</span></div>
</div>
<div class="clip" style="left:1220.20px;top:519.6px;width:177.50px;height:150.4px">
<div class="abs" style="left:0.00px;top:50.2px;width:44.42px;height:100.2px;background:rgba(198,120,246,0.400)"></div>
<div class="abs" style="left:44.38px;top:50.2px;width:44.42px;height:100.2px;background:rgba(198,120,246,0.290)"></div>
<div class="abs" style="left:88.75px;top:50.2px;width:44.42px;height:100.2px;background:rgba(198,120,246,0.400)"></div>
<div class="abs" style="left:133.12px;top:50.2px;width:44.42px;height:100.2px;background:rgba(198,120,246,0.290)"></div>
<svg class="abs" style="left:0;top:0" width="177.5" height="150.4" shape-rendering="auto" fill="#c880f2"><rect x="0.2" y="99.9" width="3.4" height="5.4"/><rect x="11.3" y="99.9" width="3.4" height="5.4"/><rect x="22.4" y="99.9" width="3.4" height="5.4"/><rect x="33.5" y="99.9" width="3.4" height="5.4"/><rect x="44.6" y="99.9" width="3.4" height="5.4"/><rect x="55.7" y="99.9" width="3.4" height="5.4"/><rect x="66.8" y="99.9" width="3.4" height="5.4"/><rect x="77.9" y="99.9" width="3.4" height="5.4"/><rect x="89.0" y="99.9" width="3.4" height="5.4"/><rect x="100.0" y="99.9" width="3.4" height="5.4"/><rect x="111.1" y="99.9" width="3.4" height="5.4"/><rect x="122.2" y="99.9" width="3.4" height="5.4"/><rect x="133.3" y="99.9" width="3.4" height="5.4"/><rect x="144.4" y="99.9" width="3.4" height="5.4"/><rect x="155.5" y="99.9" width="3.4" height="5.4"/><rect x="166.6" y="99.9" width="3.4" height="5.4"/></svg>
<div class="ch" style="height:50.2px;background:#c678f6"><span class="cjk">鼓组</span></div>
</div>
<div class="clip" style="left:1575.20px;top:519.6px;width:177.50px;height:150.4px">
<div class="abs" style="left:0.00px;top:50.2px;width:44.42px;height:100.2px;background:rgba(198,120,246,0.400)"></div>
<div class="abs" style="left:44.38px;top:50.2px;width:44.42px;height:100.2px;background:rgba(198,120,246,0.290)"></div>
<div class="abs" style="left:88.75px;top:50.2px;width:44.42px;height:100.2px;background:rgba(198,120,246,0.400)"></div>
<div class="abs" style="left:133.12px;top:50.2px;width:44.42px;height:100.2px;background:rgba(198,120,246,0.290)"></div>
<svg class="abs" style="left:0;top:0" width="177.5" height="150.4" shape-rendering="auto" fill="#c880f2"><rect x="0.2" y="99.9" width="3.4" height="5.4"/><rect x="11.3" y="99.9" width="3.4" height="5.4"/><rect x="22.4" y="99.9" width="3.4" height="5.4"/><rect x="33.5" y="99.9" width="3.4" height="5.4"/><rect x="44.6" y="99.9" width="3.4" height="5.4"/><rect x="55.7" y="99.9" width="3.4" height="5.4"/><rect x="66.8" y="99.9" width="3.4" height="5.4"/><rect x="77.9" y="99.9" width="3.4" height="5.4"/><rect x="89.0" y="99.9" width="3.4" height="5.4"/><rect x="100.0" y="99.9" width="3.4" height="5.4"/><rect x="111.1" y="99.9" width="3.4" height="5.4"/><rect x="122.2" y="99.9" width="3.4" height="5.4"/><rect x="133.3" y="99.9" width="3.4" height="5.4"/><rect x="144.4" y="99.9" width="3.4" height="5.4"/><rect x="155.5" y="99.9" width="3.4" height="5.4"/><rect x="166.6" y="99.9" width="3.4" height="5.4"/></svg>
<div class="ch" style="height:50.2px;background:#c678f6"><span class="cjk">鼓组</span></div>
</div>
<div class="clip" style="left:687.70px;top:673.6px;width:355.00px;height:150.4px">
<div class="abs" style="left:0.00px;top:50.2px;width:44.42px;height:100.2px;background:rgba(47,127,225,0.400)"></div>
<div class="abs" style="left:44.38px;top:50.2px;width:44.42px;height:100.2px;background:rgba(47,127,225,0.290)"></div>
<div class="abs" style="left:88.75px;top:50.2px;width:44.42px;height:100.2px;background:rgba(47,127,225,0.400)"></div>
<div class="abs" style="left:133.12px;top:50.2px;width:44.42px;height:100.2px;background:rgba(47,127,225,0.290)"></div>
<div class="abs" style="left:177.50px;top:50.2px;width:44.42px;height:100.2px;background:rgba(47,127,225,0.400)"></div>
<div class="abs" style="left:221.88px;top:50.2px;width:44.42px;height:100.2px;background:rgba(47,127,225,0.290)"></div>
<div class="abs" style="left:266.25px;top:50.2px;width:44.42px;height:100.2px;background:rgba(47,127,225,0.400)"></div>
<div class="abs" style="left:310.62px;top:50.2px;width:44.42px;height:100.2px;background:rgba(47,127,225,0.290)"></div>
<svg class="abs" style="left:0;top:0" width="355.0" height="150.4" shape-rendering="auto" fill="#3c8aea"><rect x="5.6" y="100.0" width="3.0" height="5.4"/><rect x="16.7" y="100.0" width="3.0" height="5.4"/><rect x="27.8" y="100.0" width="3.0" height="5.4"/><rect x="38.9" y="100.0" width="3.0" height="5.4"/><rect x="50.0" y="100.0" width="3.0" height="5.4"/><rect x="61.1" y="100.0" width="3.0" height="5.4"/><rect x="72.2" y="100.0" width="3.0" height="5.4"/><rect x="83.3" y="100.0" width="3.0" height="5.4"/><rect x="94.3" y="100.0" width="3.0" height="5.4"/><rect x="105.4" y="100.0" width="3.0" height="5.4"/><rect x="116.5" y="100.0" width="3.0" height="5.4"/><rect x="127.6" y="100.0" width="3.0" height="5.4"/><rect x="138.7" y="100.0" width="3.0" height="5.4"/><rect x="149.8" y="100.0" width="3.0" height="5.4"/><rect x="160.9" y="100.0" width="3.0" height="5.4"/><rect x="172.0" y="100.0" width="3.0" height="5.4"/><rect x="183.1" y="100.0" width="3.0" height="5.4"/><rect x="194.2" y="100.0" width="3.0" height="5.4"/><rect x="205.3" y="100.0" width="3.0" height="5.4"/><rect x="216.4" y="100.0" width="3.0" height="5.4"/><rect x="227.5" y="100.0" width="3.0" height="5.4"/><rect x="238.6" y="100.0" width="3.0" height="5.4"/><rect x="249.7" y="100.0" width="3.0" height="5.4"/><rect x="260.8" y="100.0" width="3.0" height="5.4"/><rect x="271.9" y="100.0" width="3.0" height="5.4"/><rect x="282.9" y="100.0" width="3.0" height="5.4"/><rect x="294.0" y="100.0" width="3.0" height="5.4"/><rect x="305.1" y="100.0" width="3.0" height="5.4"/><rect x="316.2" y="100.0" width="3.0" height="5.4"/><rect x="327.3" y="100.0" width="3.0" height="5.4"/><rect x="338.4" y="100.0" width="3.0" height="5.4"/><rect x="349.5" y="100.0" width="3.0" height="5.4"/><rect x="11.0" y="79.9" width="3.0" height="5.4"/><rect x="11.0" y="119.9" width="3.0" height="5.4"/><rect x="33.2" y="79.9" width="3.0" height="5.4"/><rect x="33.2" y="119.9" width="3.0" height="5.4"/><rect x="55.4" y="79.9" width="3.0" height="5.4"/><rect x="55.4" y="119.9" width="3.0" height="5.4"/><rect x="77.6" y="79.9" width="3.0" height="5.4"/><rect x="77.6" y="119.9" width="3.0" height="5.4"/><rect x="99.8" y="79.9" width="3.0" height="5.4"/><rect x="99.8" y="119.9" width="3.0" height="5.4"/><rect x="121.9" y="79.9" width="3.0" height="5.4"/><rect x="121.9" y="119.9" width="3.0" height="5.4"/><rect x="144.1" y="79.9" width="3.0" height="5.4"/><rect x="144.1" y="119.9" width="3.0" height="5.4"/><rect x="166.3" y="79.9" width="3.0" height="5.4"/><rect x="166.3" y="119.9" width="3.0" height="5.4"/><rect x="188.5" y="79.9" width="3.0" height="5.4"/><rect x="188.5" y="119.9" width="3.0" height="5.4"/><rect x="210.7" y="79.9" width="3.0" height="5.4"/><rect x="210.7" y="119.9" width="3.0" height="5.4"/><rect x="232.9" y="79.9" width="3.0" height="5.4"/><rect x="232.9" y="119.9" width="3.0" height="5.4"/><rect x="255.1" y="79.9" width="3.0" height="5.4"/><rect x="255.1" y="119.9" width="3.0" height="5.4"/><rect x="277.2" y="79.9" width="3.0" height="5.4"/><rect x="277.2" y="119.9" width="3.0" height="5.4"/><rect x="299.4" y="79.9" width="3.0" height="5.4"/><rect x="299.4" y="119.9" width="3.0" height="5.4"/><rect x="321.6" y="79.9" width="3.0" height="5.4"/><rect x="321.6" y="119.9" width="3.0" height="5.4"/><rect x="343.8" y="79.9" width="3.0" height="5.4"/><rect x="343.8" y="119.9" width="3.0" height="5.4"/></svg>
<div class="ch" style="height:50.2px;background:#2f7fe1"><span class="cjk">鼓组</span></div>
</div>
<div class="clip" style="left:1220.20px;top:673.6px;width:177.50px;height:150.4px">
<div class="abs" style="left:0.00px;top:50.2px;width:44.42px;height:100.2px;background:rgba(47,127,225,0.400)"></div>
<div class="abs" style="left:44.38px;top:50.2px;width:44.42px;height:100.2px;background:rgba(47,127,225,0.290)"></div>
<div class="abs" style="left:88.75px;top:50.2px;width:44.42px;height:100.2px;background:rgba(47,127,225,0.400)"></div>
<div class="abs" style="left:133.12px;top:50.2px;width:44.42px;height:100.2px;background:rgba(47,127,225,0.290)"></div>
<svg class="abs" style="left:0;top:0" width="177.5" height="150.4" shape-rendering="auto" fill="#3c8aea"><rect x="5.6" y="100.0" width="3.0" height="5.4"/><rect x="16.7" y="100.0" width="3.0" height="5.4"/><rect x="27.8" y="100.0" width="3.0" height="5.4"/><rect x="38.9" y="100.0" width="3.0" height="5.4"/><rect x="50.0" y="100.0" width="3.0" height="5.4"/><rect x="61.1" y="100.0" width="3.0" height="5.4"/><rect x="72.2" y="100.0" width="3.0" height="5.4"/><rect x="83.3" y="100.0" width="3.0" height="5.4"/><rect x="94.3" y="100.0" width="3.0" height="5.4"/><rect x="105.4" y="100.0" width="3.0" height="5.4"/><rect x="116.5" y="100.0" width="3.0" height="5.4"/><rect x="127.6" y="100.0" width="3.0" height="5.4"/><rect x="138.7" y="100.0" width="3.0" height="5.4"/><rect x="149.8" y="100.0" width="3.0" height="5.4"/><rect x="160.9" y="100.0" width="3.0" height="5.4"/><rect x="172.0" y="100.0" width="3.0" height="5.4"/><rect x="11.0" y="79.9" width="3.0" height="5.4"/><rect x="11.0" y="119.9" width="3.0" height="5.4"/><rect x="33.2" y="79.9" width="3.0" height="5.4"/><rect x="33.2" y="119.9" width="3.0" height="5.4"/><rect x="55.4" y="79.9" width="3.0" height="5.4"/><rect x="55.4" y="119.9" width="3.0" height="5.4"/><rect x="77.6" y="79.9" width="3.0" height="5.4"/><rect x="77.6" y="119.9" width="3.0" height="5.4"/><rect x="99.8" y="79.9" width="3.0" height="5.4"/><rect x="99.8" y="119.9" width="3.0" height="5.4"/><rect x="121.9" y="79.9" width="3.0" height="5.4"/><rect x="121.9" y="119.9" width="3.0" height="5.4"/><rect x="144.1" y="79.9" width="3.0" height="5.4"/><rect x="144.1" y="119.9" width="3.0" height="5.4"/><rect x="166.3" y="79.9" width="3.0" height="5.4"/><rect x="166.3" y="119.9" width="3.0" height="5.4"/></svg>
<div class="ch" style="height:50.2px;background:#2f7fe1"><span class="cjk">鼓组</span></div>
</div>
<div class="clip" style="left:1397.70px;top:673.6px;width:177.50px;height:150.4px">
<div class="abs" style="left:0;top:50.2px;width:100%;height:100.2px;background:rgba(47,127,225,0.360)"></div>
<svg class="abs" style="left:0;top:0" width="177.5" height="150.4" shape-rendering="auto" fill="#3c8aea"><rect x="0.2" y="122.9" width="3.0" height="5.4"/><rect x="11.3" y="122.9" width="3.0" height="5.4"/><rect x="22.4" y="122.9" width="3.0" height="5.4"/><rect x="33.5" y="122.9" width="3.0" height="5.4"/><rect x="44.6" y="122.9" width="3.0" height="5.4"/><rect x="55.7" y="122.9" width="3.0" height="5.4"/><rect x="66.8" y="122.9" width="3.0" height="5.4"/><rect x="77.9" y="122.9" width="3.0" height="5.4"/><rect x="89.0" y="122.9" width="3.0" height="5.4"/><rect x="94.5" y="122.9" width="3.0" height="5.4"/><rect x="100.0" y="122.9" width="3.0" height="5.4"/><rect x="105.6" y="122.9" width="3.0" height="5.4"/><rect x="111.1" y="122.9" width="3.0" height="5.4"/><rect x="116.7" y="122.9" width="3.0" height="5.4"/><rect x="122.2" y="122.9" width="3.0" height="5.4"/><rect x="127.8" y="122.9" width="3.0" height="5.4"/><rect x="133.2" y="122.9" width="32.5" height="5.4"/><rect x="166.9" y="107.7" width="3.0" height="5.4"/><rect x="169.9" y="92.4" width="3.0" height="5.4"/><rect x="172.2" y="77.4" width="5.0" height="5.4"/></svg>
<div class="ch" style="height:50.2px;background:#2f7fe1"><span class="cjk">鼓组</span></div>
</div>
<div class="clip" style="left:1575.20px;top:673.6px;width:177.50px;height:150.4px">
<div class="abs" style="left:0;top:50.2px;width:100%;height:100.2px;background:rgba(47,127,225,0.360)"></div>
<svg class="abs" style="left:0;top:0" width="177.5" height="150.4" shape-rendering="auto" fill="#3c8aea"><rect x="5.4" y="84.6" width="2.5" height="6.0"/><rect x="10.9" y="114.6" width="3.0" height="6.0"/><rect x="16.7" y="84.6" width="2.5" height="6.0"/></svg>
<div class="ch" style="height:50.2px;background:#2f7fe1"><span class="cjk">鼓组</span></div>
</div>
<div class="clip" style="left:510.20px;top:827.6px;width:177.50px;height:150.4px">
<div class="abs" style="left:0;top:50.2px;width:100%;height:100.2px;background:rgba(108,92,236,0.360)"></div>
<svg class="abs" style="left:0;top:0" width="177.5" height="150.4"><path d="M0.0 100.9 L0.0 69.9 L1.2 70.9 L2.0 74.8 L2.8 78.2 L3.6 81.1 L4.4 83.7 L5.2 85.9 L6.0 87.8 L6.8 89.5 L7.6 91.0 L8.4 92.3 L9.2 93.4 L10.0 94.4 L10.8 95.2 L11.6 96.0 L12.4 96.6 L13.2 97.1 L14.0 97.6 L14.8 98.1 L15.6 98.4 L16.4 98.7 L17.2 99.0 L18.0 99.3 L18.8 99.5 L19.6 99.7 L20.4 99.8 L21.2 100.0 L22.0 100.1 L22.8 100.2 L23.6 100.3 L24.4 100.3 L25.2 100.3 L26.0 100.3 L26.8 100.3 L27.6 100.3 L28.4 100.3 L29.2 100.3 L30.0 100.3 L30.8 100.3 L31.6 100.3 L32.4 100.3 L122.0 100.4 L122.0 101.4 L32.4 101.5 L31.6 101.5 L30.8 101.5 L30.0 101.5 L29.2 101.5 L28.4 101.5 L27.6 101.5 L26.8 101.5 L26.0 101.5 L25.2 101.5 L24.4 101.5 L23.6 101.5 L22.8 101.6 L22.0 101.7 L21.2 101.8 L20.4 102.0 L19.6 102.1 L18.8 102.3 L18.0 102.5 L17.2 102.8 L16.4 103.1 L15.6 103.4 L14.8 103.7 L14.0 104.2 L13.2 104.6 L12.4 105.2 L11.6 105.8 L10.8 106.6 L10.0 107.4 L9.2 108.4 L8.4 109.5 L7.6 110.8 L6.8 112.3 L6.0 114.0 L5.2 115.9 L4.4 118.1 L3.6 120.7 L2.8 123.6 L2.0 127.0 L1.2 130.9 L0.0 131.9Z" fill="#7468f0"/></svg>
<div class="ch" style="height:50.2px;background:#6c5cec"><span style="transform:translateX(-2.5px) scaleX(0.930)">Crash FX</span></div>
</div>
<div class="clip" style="left:687.70px;top:827.6px;width:177.50px;height:150.4px">
<div class="abs" style="left:0;top:50.2px;width:100%;height:100.2px;background:rgba(108,92,236,0.360)"></div>
<svg class="abs" style="left:0;top:0" width="177.5" height="150.4"><path d="M0.0 100.9 L0.0 69.9 L1.2 70.9 L2.0 74.8 L2.8 78.2 L3.6 81.1 L4.4 83.7 L5.2 85.9 L6.0 87.8 L6.8 89.5 L7.6 91.0 L8.4 92.3 L9.2 93.4 L10.0 94.4 L10.8 95.2 L11.6 96.0 L12.4 96.6 L13.2 97.1 L14.0 97.6 L14.8 98.1 L15.6 98.4 L16.4 98.7 L17.2 99.0 L18.0 99.3 L18.8 99.5 L19.6 99.7 L20.4 99.8 L21.2 100.0 L22.0 100.1 L22.8 100.2 L23.6 100.3 L24.4 100.3 L25.2 100.3 L26.0 100.3 L26.8 100.3 L27.6 100.3 L28.4 100.3 L29.2 100.3 L30.0 100.3 L30.8 100.3 L31.6 100.3 L32.4 100.3 L122.0 100.4 L122.0 101.4 L32.4 101.5 L31.6 101.5 L30.8 101.5 L30.0 101.5 L29.2 101.5 L28.4 101.5 L27.6 101.5 L26.8 101.5 L26.0 101.5 L25.2 101.5 L24.4 101.5 L23.6 101.5 L22.8 101.6 L22.0 101.7 L21.2 101.8 L20.4 102.0 L19.6 102.1 L18.8 102.3 L18.0 102.5 L17.2 102.8 L16.4 103.1 L15.6 103.4 L14.8 103.7 L14.0 104.2 L13.2 104.6 L12.4 105.2 L11.6 105.8 L10.8 106.6 L10.0 107.4 L9.2 108.4 L8.4 109.5 L7.6 110.8 L6.8 112.3 L6.0 114.0 L5.2 115.9 L4.4 118.1 L3.6 120.7 L2.8 123.6 L2.0 127.0 L1.2 130.9 L0.0 131.9Z" fill="#7468f0"/></svg>
<div class="ch" style="height:50.2px;background:#6c5cec"><span style="transform:translateX(-2.5px) scaleX(0.930)">Crash FX</span></div>
</div>
<div class="clip" style="left:1042.70px;top:827.6px;width:177.50px;height:150.4px">
<div class="abs" style="left:0;top:50.2px;width:100%;height:100.2px;background:rgba(108,92,236,0.360)"></div>
<svg class="abs" style="left:0;top:0" width="177.5" height="150.4"><path d="M0.0 100.9 L0.0 69.9 L1.2 70.9 L2.0 74.8 L2.8 78.2 L3.6 81.1 L4.4 83.7 L5.2 85.9 L6.0 87.8 L6.8 89.5 L7.6 91.0 L8.4 92.3 L9.2 93.4 L10.0 94.4 L10.8 95.2 L11.6 96.0 L12.4 96.6 L13.2 97.1 L14.0 97.6 L14.8 98.1 L15.6 98.4 L16.4 98.7 L17.2 99.0 L18.0 99.3 L18.8 99.5 L19.6 99.7 L20.4 99.8 L21.2 100.0 L22.0 100.1 L22.8 100.2 L23.6 100.3 L24.4 100.3 L25.2 100.3 L26.0 100.3 L26.8 100.3 L27.6 100.3 L28.4 100.3 L29.2 100.3 L30.0 100.3 L30.8 100.3 L31.6 100.3 L32.4 100.3 L122.0 100.4 L122.0 101.4 L32.4 101.5 L31.6 101.5 L30.8 101.5 L30.0 101.5 L29.2 101.5 L28.4 101.5 L27.6 101.5 L26.8 101.5 L26.0 101.5 L25.2 101.5 L24.4 101.5 L23.6 101.5 L22.8 101.6 L22.0 101.7 L21.2 101.8 L20.4 102.0 L19.6 102.1 L18.8 102.3 L18.0 102.5 L17.2 102.8 L16.4 103.1 L15.6 103.4 L14.8 103.7 L14.0 104.2 L13.2 104.6 L12.4 105.2 L11.6 105.8 L10.8 106.6 L10.0 107.4 L9.2 108.4 L8.4 109.5 L7.6 110.8 L6.8 112.3 L6.0 114.0 L5.2 115.9 L4.4 118.1 L3.6 120.7 L2.8 123.6 L2.0 127.0 L1.2 130.9 L0.0 131.9Z" fill="#7468f0"/></svg>
<div class="ch" style="height:50.2px;background:#6c5cec"><span style="transform:translateX(-2.5px) scaleX(0.930)">Crash FX</span></div>
</div>
<div class="clip" style="left:1220.20px;top:827.6px;width:177.50px;height:150.4px">
<div class="abs" style="left:0;top:50.2px;width:100%;height:100.2px;background:rgba(108,92,236,0.360)"></div>
<svg class="abs" style="left:0;top:0" width="177.5" height="150.4"><path d="M0.0 100.9 L0.0 69.9 L1.2 70.9 L2.0 74.8 L2.8 78.2 L3.6 81.1 L4.4 83.7 L5.2 85.9 L6.0 87.8 L6.8 89.5 L7.6 91.0 L8.4 92.3 L9.2 93.4 L10.0 94.4 L10.8 95.2 L11.6 96.0 L12.4 96.6 L13.2 97.1 L14.0 97.6 L14.8 98.1 L15.6 98.4 L16.4 98.7 L17.2 99.0 L18.0 99.3 L18.8 99.5 L19.6 99.7 L20.4 99.8 L21.2 100.0 L22.0 100.1 L22.8 100.2 L23.6 100.3 L24.4 100.3 L25.2 100.3 L26.0 100.3 L26.8 100.3 L27.6 100.3 L28.4 100.3 L29.2 100.3 L30.0 100.3 L30.8 100.3 L31.6 100.3 L32.4 100.3 L122.0 100.4 L122.0 101.4 L32.4 101.5 L31.6 101.5 L30.8 101.5 L30.0 101.5 L29.2 101.5 L28.4 101.5 L27.6 101.5 L26.8 101.5 L26.0 101.5 L25.2 101.5 L24.4 101.5 L23.6 101.5 L22.8 101.6 L22.0 101.7 L21.2 101.8 L20.4 102.0 L19.6 102.1 L18.8 102.3 L18.0 102.5 L17.2 102.8 L16.4 103.1 L15.6 103.4 L14.8 103.7 L14.0 104.2 L13.2 104.6 L12.4 105.2 L11.6 105.8 L10.8 106.6 L10.0 107.4 L9.2 108.4 L8.4 109.5 L7.6 110.8 L6.8 112.3 L6.0 114.0 L5.2 115.9 L4.4 118.1 L3.6 120.7 L2.8 123.6 L2.0 127.0 L1.2 130.9 L0.0 131.9Z" fill="#7468f0"/></svg>
<div class="ch" style="height:50.2px;background:#6c5cec"><span style="transform:translateX(-2.5px) scaleX(0.930)">Crash FX</span></div>
</div>
<div class="clip" style="left:1397.70px;top:827.6px;width:177.50px;height:150.4px">
<div class="abs" style="left:0;top:50.2px;width:100%;height:100.2px;background:rgba(108,92,236,0.360)"></div>
<svg class="abs" style="left:0;top:0" width="177.5" height="150.4"><path d="M0.0 100.9 L0.0 69.9 L1.2 70.9 L2.0 74.8 L2.8 78.2 L3.6 81.1 L4.4 83.7 L5.2 85.9 L6.0 87.8 L6.8 89.5 L7.6 91.0 L8.4 92.3 L9.2 93.4 L10.0 94.4 L10.8 95.2 L11.6 96.0 L12.4 96.6 L13.2 97.1 L14.0 97.6 L14.8 98.1 L15.6 98.4 L16.4 98.7 L17.2 99.0 L18.0 99.3 L18.8 99.5 L19.6 99.7 L20.4 99.8 L21.2 100.0 L22.0 100.1 L22.8 100.2 L23.6 100.3 L24.4 100.3 L25.2 100.3 L26.0 100.3 L26.8 100.3 L27.6 100.3 L28.4 100.3 L29.2 100.3 L30.0 100.3 L30.8 100.3 L31.6 100.3 L32.4 100.3 L122.0 100.4 L122.0 101.4 L32.4 101.5 L31.6 101.5 L30.8 101.5 L30.0 101.5 L29.2 101.5 L28.4 101.5 L27.6 101.5 L26.8 101.5 L26.0 101.5 L25.2 101.5 L24.4 101.5 L23.6 101.5 L22.8 101.6 L22.0 101.7 L21.2 101.8 L20.4 102.0 L19.6 102.1 L18.8 102.3 L18.0 102.5 L17.2 102.8 L16.4 103.1 L15.6 103.4 L14.8 103.7 L14.0 104.2 L13.2 104.6 L12.4 105.2 L11.6 105.8 L10.8 106.6 L10.0 107.4 L9.2 108.4 L8.4 109.5 L7.6 110.8 L6.8 112.3 L6.0 114.0 L5.2 115.9 L4.4 118.1 L3.6 120.7 L2.8 123.6 L2.0 127.0 L1.2 130.9 L0.0 131.9Z" fill="#7468f0"/></svg>
<div class="ch" style="height:50.2px;background:#6c5cec"><span style="transform:translateX(-2.5px) scaleX(0.930)">Crash FX</span></div>
</div>
<div class="clip" style="left:1575.20px;top:827.6px;width:177.50px;height:150.4px">
<div class="abs" style="left:0;top:50.2px;width:100%;height:100.2px;background:rgba(108,92,236,0.360)"></div>
<svg class="abs" style="left:0;top:0" width="177.5" height="150.4"><path d="M0.0 100.9 L0.0 69.9 L1.2 70.9 L2.0 74.8 L2.8 78.2 L3.6 81.1 L4.4 83.7 L5.2 85.9 L6.0 87.8 L6.8 89.5 L7.6 91.0 L8.4 92.3 L9.2 93.4 L10.0 94.4 L10.8 95.2 L11.6 96.0 L12.4 96.6 L13.2 97.1 L14.0 97.6 L14.8 98.1 L15.6 98.4 L16.4 98.7 L17.2 99.0 L18.0 99.3 L18.8 99.5 L19.6 99.7 L20.4 99.8 L21.2 100.0 L22.0 100.1 L22.8 100.2 L23.6 100.3 L24.4 100.3 L25.2 100.3 L26.0 100.3 L26.8 100.3 L27.6 100.3 L28.4 100.3 L29.2 100.3 L30.0 100.3 L30.8 100.3 L31.6 100.3 L32.4 100.3 L122.0 100.4 L122.0 101.4 L32.4 101.5 L31.6 101.5 L30.8 101.5 L30.0 101.5 L29.2 101.5 L28.4 101.5 L27.6 101.5 L26.8 101.5 L26.0 101.5 L25.2 101.5 L24.4 101.5 L23.6 101.5 L22.8 101.6 L22.0 101.7 L21.2 101.8 L20.4 102.0 L19.6 102.1 L18.8 102.3 L18.0 102.5 L17.2 102.8 L16.4 103.1 L15.6 103.4 L14.8 103.7 L14.0 104.2 L13.2 104.6 L12.4 105.2 L11.6 105.8 L10.8 106.6 L10.0 107.4 L9.2 108.4 L8.4 109.5 L7.6 110.8 L6.8 112.3 L6.0 114.0 L5.2 115.9 L4.4 118.1 L3.6 120.7 L2.8 123.6 L2.0 127.0 L1.2 130.9 L0.0 131.9Z" fill="#7468f0"/></svg>
<div class="ch" style="height:50.2px;background:#6c5cec"><span style="transform:translateX(-2.5px) scaleX(0.930)">Crash FX</span></div>
</div>
<div class="clip" style="left:687.70px;top:981.6px;width:355.00px;height:150.4px">
<div class="abs" style="left:0;top:50.2px;width:100%;height:100.2px;background:rgba(71,189,99,0.360)"></div>
<svg class="abs" style="left:0;top:0" width="355.0" height="150.4" shape-rendering="auto" fill="#4fc66d"><rect x="0.3" y="85.3" width="38.3" height="5.0"/><rect x="39.1" y="91.3" width="2.3" height="5.0"/><rect x="41.9" y="97.3" width="10.6" height="5.0"/><rect x="55.8" y="97.3" width="5.0" height="5.0"/><rect x="61.3" y="103.3" width="5.0" height="5.0"/><rect x="66.9" y="97.3" width="5.0" height="5.0"/><rect x="72.4" y="103.3" width="5.0" height="5.0"/><rect x="78.0" y="97.3" width="5.0" height="5.0"/><rect x="83.5" y="91.3" width="2.3" height="5.0"/><rect x="86.3" y="109.3" width="10.6" height="5.0"/><rect x="100.1" y="109.3" width="5.0" height="5.0"/><rect x="105.7" y="115.3" width="5.0" height="5.0"/><rect x="111.2" y="109.3" width="5.0" height="5.0"/><rect x="116.8" y="115.3" width="5.0" height="5.0"/><rect x="122.3" y="109.3" width="5.0" height="5.0"/><rect x="127.9" y="97.3" width="2.3" height="5.0"/><rect x="130.7" y="121.3" width="10.6" height="5.0"/><rect x="144.5" y="121.3" width="5.0" height="5.0"/><rect x="150.1" y="127.3" width="5.0" height="5.0"/><rect x="155.6" y="121.3" width="5.0" height="5.0"/><rect x="161.2" y="115.3" width="5.0" height="5.0"/><rect x="166.7" y="109.3" width="5.0" height="5.0"/><rect x="172.3" y="97.3" width="5.0" height="5.0"/><rect x="177.8" y="85.3" width="32.8" height="5.0"/><rect x="211.1" y="79.3" width="5.0" height="5.0"/><rect x="216.6" y="91.3" width="2.3" height="5.0"/><rect x="219.4" y="97.3" width="10.6" height="5.0"/><rect x="233.3" y="97.3" width="5.0" height="5.0"/><rect x="238.8" y="103.3" width="5.0" height="5.0"/><rect x="244.4" y="97.3" width="5.0" height="5.0"/><rect x="249.9" y="103.3" width="5.0" height="5.0"/><rect x="255.5" y="97.3" width="5.0" height="5.0"/><rect x="261.0" y="91.3" width="2.3" height="5.0"/><rect x="263.8" y="109.3" width="10.6" height="5.0"/><rect x="277.6" y="109.3" width="5.0" height="5.0"/><rect x="283.2" y="115.3" width="5.0" height="5.0"/><rect x="288.7" y="109.3" width="5.0" height="5.0"/><rect x="294.3" y="115.3" width="5.0" height="5.0"/><rect x="299.8" y="109.3" width="5.0" height="5.0"/><rect x="305.4" y="97.3" width="2.3" height="5.0"/><rect x="308.2" y="121.3" width="10.6" height="5.0"/><rect x="322.0" y="121.3" width="5.0" height="5.0"/><rect x="327.6" y="127.3" width="10.6" height="5.0"/><rect x="338.7" y="121.3" width="5.0" height="5.0"/></svg>
<div class="ch" style="height:50.2px;background:#47bd63"><span style="transform:translateX(-1.0px) scaleX(1.015)">Alone Lead</span></div>
</div>
<div class="clip" style="left:1042.70px;top:981.6px;width:133.12px;height:150.4px">
<div class="abs" style="left:0.00px;top:50.2px;width:44.42px;height:100.2px;background:rgba(71,189,99,0.400)"></div>
<div class="abs" style="left:44.38px;top:50.2px;width:44.42px;height:100.2px;background:rgba(71,189,99,0.290)"></div>
<div class="abs" style="left:88.75px;top:50.2px;width:44.42px;height:100.2px;background:rgba(71,189,99,0.400)"></div>
<svg class="abs" style="left:0;top:0" width="133.1" height="150.4" shape-rendering="auto" fill="#4fc66d"><rect x="0.1" y="93.3" width="4.7" height="5.0"/><rect x="5.6" y="123.3" width="4.7" height="5.0"/><rect x="11.2" y="78.3" width="4.7" height="5.0"/><rect x="16.7" y="123.3" width="4.7" height="5.0"/><rect x="22.3" y="108.4" width="4.7" height="5.0"/><rect x="27.8" y="78.3" width="4.7" height="5.0"/><rect x="33.4" y="93.3" width="4.7" height="5.0"/><rect x="38.9" y="123.3" width="4.7" height="5.0"/><rect x="44.5" y="93.3" width="4.7" height="5.0"/><rect x="50.0" y="123.3" width="4.7" height="5.0"/><rect x="55.6" y="78.3" width="4.7" height="5.0"/><rect x="61.1" y="123.3" width="4.7" height="5.0"/><rect x="66.7" y="108.4" width="4.7" height="5.0"/><rect x="72.2" y="78.3" width="4.7" height="5.0"/><rect x="77.8" y="93.3" width="4.7" height="5.0"/><rect x="83.3" y="123.3" width="4.7" height="5.0"/><rect x="88.8" y="93.3" width="4.7" height="5.0"/><rect x="94.4" y="123.3" width="4.7" height="5.0"/><rect x="99.9" y="78.3" width="4.7" height="5.0"/><rect x="105.5" y="123.3" width="4.7" height="5.0"/><rect x="111.0" y="108.4" width="4.7" height="5.0"/><rect x="116.6" y="78.3" width="4.7" height="5.0"/><rect x="122.1" y="93.3" width="4.7" height="5.0"/><rect x="127.7" y="123.3" width="4.7" height="5.0"/></svg>
<div class="ch" style="height:50.2px;background:#47bd63"><span style="transform:translateX(-1.0px) scaleX(1.015)">Alone Lead</span></div>
</div>
<div class="clip" style="left:1220.20px;top:981.6px;width:177.50px;height:150.4px">
<div class="abs" style="left:0;top:50.2px;width:100%;height:100.2px;background:rgba(71,189,99,0.360)"></div>
<svg class="abs" style="left:0;top:0" width="177.5" height="150.4" shape-rendering="auto" fill="#4fc66d"><rect x="0.3" y="113.4" width="10.8" height="5.0"/><rect x="11.4" y="93.4" width="10.8" height="5.0"/><rect x="22.5" y="98.4" width="2.5" height="5.0"/><rect x="25.3" y="103.4" width="5.2" height="5.0"/><rect x="30.8" y="88.4" width="5.2" height="5.0"/><rect x="36.4" y="103.4" width="8.0" height="5.0"/><rect x="44.7" y="108.4" width="5.2" height="5.0"/><rect x="50.2" y="103.4" width="5.2" height="5.0"/><rect x="55.8" y="108.4" width="5.2" height="5.0"/><rect x="61.3" y="118.4" width="2.5" height="5.0"/><rect x="64.1" y="113.4" width="35.8" height="5.0"/><rect x="100.1" y="93.4" width="10.8" height="5.0"/><rect x="111.2" y="98.4" width="2.5" height="5.0"/><rect x="114.0" y="103.4" width="5.2" height="5.0"/><rect x="119.6" y="88.4" width="5.2" height="5.0"/><rect x="125.1" y="103.4" width="8.0" height="5.0"/><rect x="133.4" y="108.4" width="5.2" height="5.0"/><rect x="139.0" y="103.4" width="5.2" height="5.0"/><rect x="144.5" y="108.4" width="5.2" height="5.0"/><rect x="150.1" y="118.4" width="2.5" height="5.0"/><rect x="152.8" y="123.4" width="13.6" height="5.0"/><rect x="166.7" y="128.4" width="10.8" height="5.0"/></svg>
<div class="ch" style="height:50.2px;background:#47bd63"><span style="transform:translateX(-1.0px) scaleX(1.015)">Alone Lead</span></div>
</div>
<div class="clip" style="left:1575.20px;top:1135.6px;width:177.50px;height:150.4px">
<div class="abs" style="left:0;top:50.2px;width:100%;height:100.2px;background:rgba(71,189,99,0.360)"></div>
<svg class="abs" style="left:0;top:0" width="177.5" height="150.4" shape-rendering="auto" fill="#4fc66d"><rect x="0.2" y="116.9" width="2.2" height="5.0"/><rect x="2.4" y="122.2" width="4.2" height="5.0"/><rect x="7.7" y="113.2" width="5.3" height="5.0"/><rect x="14.1" y="128.1" width="4.6" height="5.0"/><rect x="19.4" y="108.4" width="6.0" height="5.0"/></svg>
<div class="ch" style="height:50.2px;background:#47bd63"><span style="transform:translateX(0.0px) scaleX(0.950)">Wide Pluck</span></div>
</div>
<div class="clip" style="left:1575.20px;top:1289.6px;width:177.50px;height:150.4px">
<div class="abs" style="left:0;top:50.2px;width:100%;height:100.2px;background:rgba(198,120,246,0.360)"></div>
<svg class="abs" style="left:0;top:0" width="177.5" height="150.4" shape-rendering="auto" fill="#c880f2"><rect x="0.2" y="116.9" width="2.2" height="5.0"/><rect x="2.4" y="122.2" width="4.2" height="5.0"/><rect x="7.7" y="113.2" width="5.3" height="5.0"/><rect x="14.1" y="128.1" width="4.6" height="5.0"/><rect x="19.4" y="108.4" width="6.0" height="5.0"/></svg>
<div class="ch" style="height:50.2px;background:#c678f6"><span style="transform:translateX(-1.0px) scaleX(0.950)">Simple Pluck</span></div>
</div>
<div class="clip" style="left:1042.70px;top:1450.0px;width:355.00px;height:160.0px">
<div class="abs" style="left:0;top:49.5px;width:100%;height:110.5px;background:#364666"></div>
<div class="abs" style="left:88.95px;top:49.5px;width:3px;height:110.5px;background:#2d3c5c"></div>
<div class="abs" style="left:177.70px;top:49.5px;width:3px;height:110.5px;background:#2d3c5c"></div>
<div class="abs" style="left:266.45px;top:49.5px;width:3px;height:110.5px;background:#2d3c5c"></div>
<div class="abs" style="left:0.2px;top:49.5px;width:2.8px;height:110.5px;background:#2d3c5c"></div>
<div class="abs" style="left:0;top:110.0px;width:100%;height:3.1px;background:#3b81db"></div>
<div class="ch" style="height:49.5px;background:#2f7fe1"><span class="cjk">总控 - 拍速</span></div>
</div>
<div class="abs" style="left:0;top:210px;width:1600px;height:3.75px;background:#26282e"></div>
<div class="abs" style="left:0;top:124px;width:1600px;height:86px;pointer-events:none"></div>
<svg class="abs" style="left:0;top:0" width="1600" height="1600"><path d="M347.700 166.800H397.300L372.500 210z" fill="#fff"/><rect x="372.900" y="213.600" width="3.100" height="1400" fill="#fff"/></svg>
</body></html>
